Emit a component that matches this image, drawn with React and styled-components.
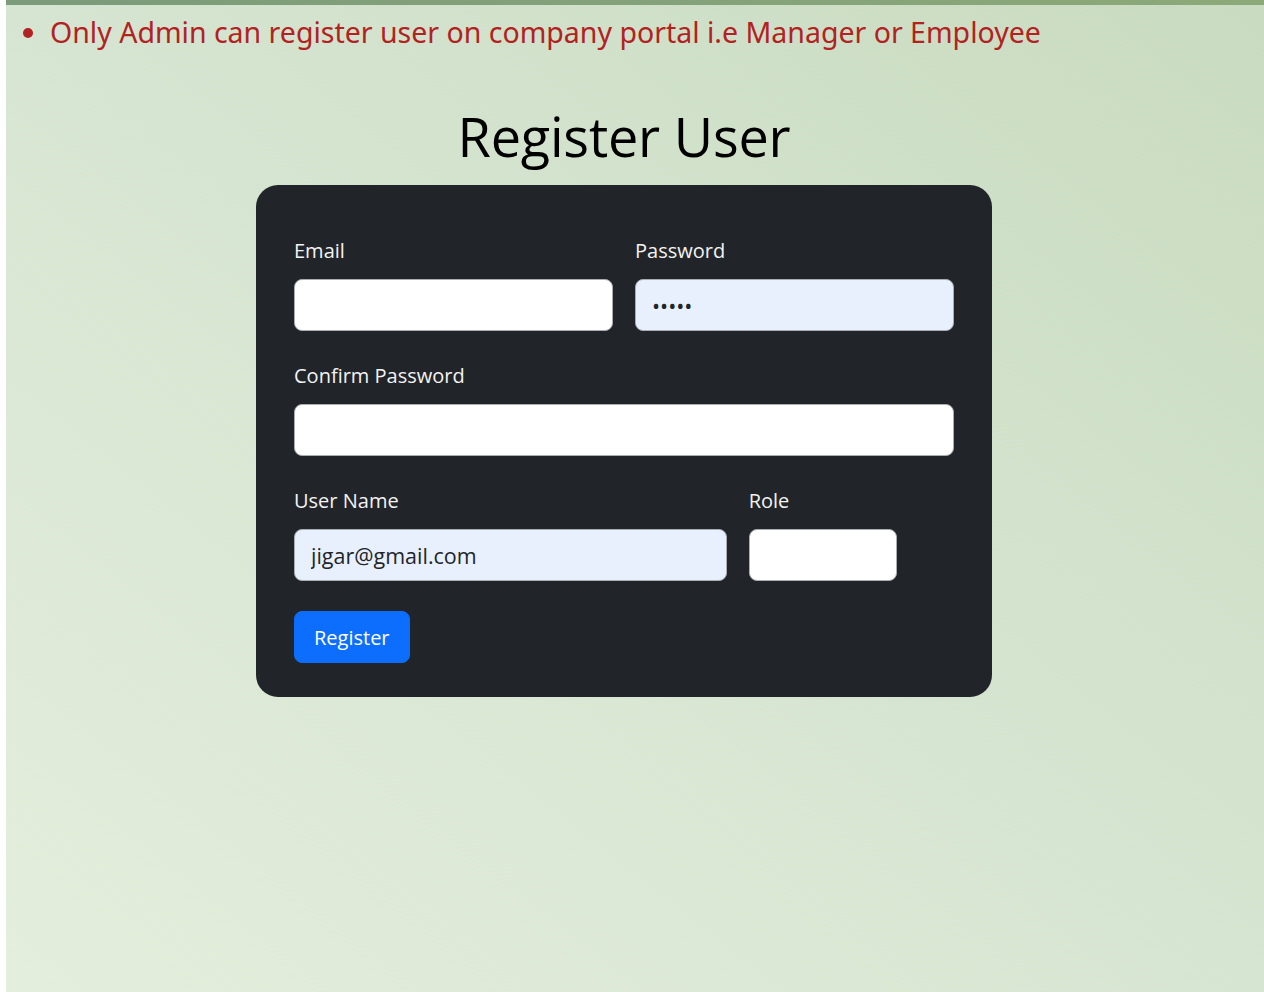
import React from 'react';
import styled, { createGlobalStyle } from 'styled-components';

const GlobalStyle = createGlobalStyle`
  html, body {
    margin: 0;
    padding: 0;
    background: #ffffff;
  }
  body {
    font-family: 'Open Sans', 'Noto Sans', sans-serif;
  }
  * {
    box-sizing: border-box;
  }
`;

const Page = styled.div`
  min-height: 992px;
  margin-left: 6px;
  background: linear-gradient(to top right, #e4eedc 0%, #d6e5d1 50%, #c9dbc0 100%);
`;

const TopBar = styled.div`
  height: 5px;
  background: linear-gradient(to right, #7b9b7a, #8ca979);
`;

const Notes = styled.ul`
  margin: 6px 0 0 0;
  padding-left: 44px;
  font-family: 'Noto Sans', 'Open Sans', sans-serif;
  font-size: 28.5px;
  line-height: 42px;
  color: #b22222;
`;

const Main = styled.main`
  display: flex;
  flex-direction: column;
  align-items: center;
  padding-right: 22px;
`;

const Title = styled.h1`
  margin: 51px 0 16px 0;
  font-family: 'Open Sans', sans-serif;
  font-weight: 400;
  font-size: 54px;
  line-height: 65px;
  letter-spacing: -0.2px;
  color: #000;
`;

const Card = styled.form`
  width: 736px;
  background: #212529;
  border-radius: 22px;
  padding: 51px 38px 34px 38px;
`;

const Row = styled.div`
  display: grid;
  grid-template-columns: repeat(12, 1fr);
  column-gap: 22px;
  margin-bottom: 30px;
`;

const Field = styled.div`
  grid-column: span ${p => p.span};
  display: flex;
  flex-direction: column;
  align-items: flex-start;
`;

const Label = styled.label`
  font-size: 20px;
  line-height: 30px;
  color: #f3f3f3;
  margin-bottom: 13px;
`;

const Input = styled.input`
  width: 100%;
  height: 52px;
  padding: 0 16px;
  font-family: 'Open Sans', sans-serif;
  font-size: 21.5px;
  color: #212529;
  background: ${p => (p.$filled ? '#e8f0fe' : '#ffffff')};
  border: 1px solid #a9adb1;
  border-radius: 8px;
  outline: none;
`;

const Button = styled.button`
  height: 52px;
  padding: 0 19px;
  font-family: 'Open Sans', sans-serif;
  font-size: 20px;
  color: #ffffff;
  background: #0d6efd;
  border: 1px solid #0d6efd;
  border-radius: 8px;
  cursor: pointer;
`;

const App = () => (
  <>
    <GlobalStyle />
    <Page>
      <TopBar />
      <Notes>
        <li>Only Admin can register user on company portal i.e Manager or Employee</li>
      </Notes>
      <Main>
        <Title>Register User</Title>
        <Card onSubmit={e => e.preventDefault()}>
          <Row>
            <Field span={6}>
              <Label>Email</Label>
              <Input type="email" />
            </Field>
            <Field span={6}>
              <Label>Password</Label>
              <Input type="password" defaultValue="12345" $filled />
            </Field>
          </Row>
          <Row>
            <Field span={12}>
              <Label>Confirm Password</Label>
              <Input type="password" />
            </Field>
          </Row>
          <Row>
            <Field span={8}>
              <Label>User Name</Label>
              <Input type="text" defaultValue="jigar@gmail.com" $filled />
            </Field>
            <Field span={3}>
              <Label>Role</Label>
              <Input type="text" />
            </Field>
          </Row>
          <Button type="submit">Register</Button>
        </Card>
      </Main>
    </Page>
  </>
);

export default App;
